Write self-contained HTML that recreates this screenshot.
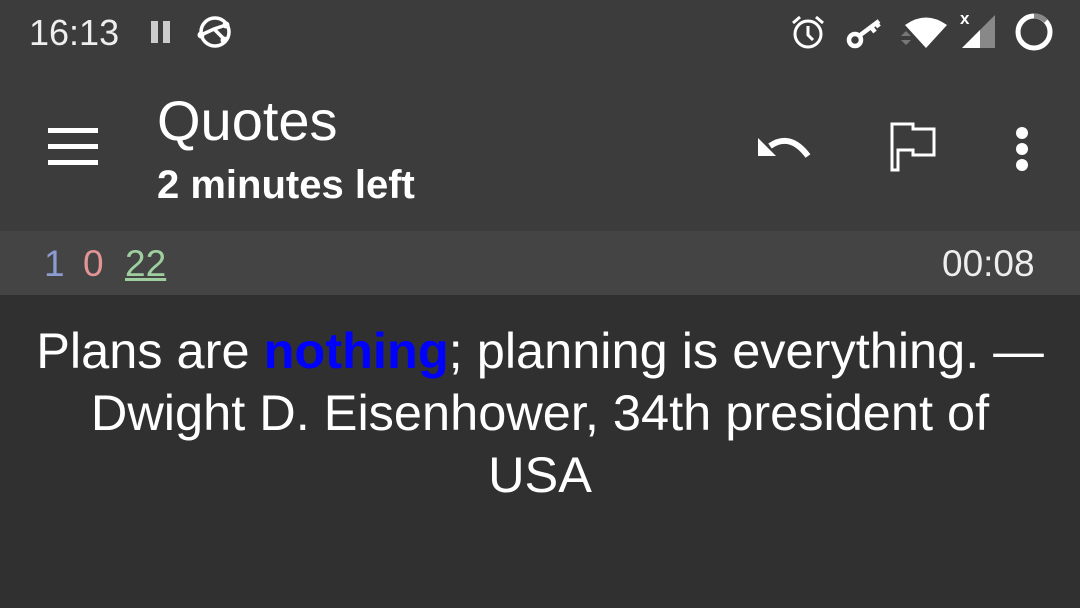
<!DOCTYPE html>
<html><head><meta charset="utf-8"><style>
*{margin:0;padding:0;box-sizing:border-box}
body{width:1080px;height:608px;background:#303030;font-family:"Liberation Sans",sans-serif;color:#fff;position:relative;overflow:hidden}
.top{position:absolute;left:0;top:0;width:1080px;height:231px;background:#3c3c3c}
.band{position:absolute;left:0;top:231px;width:1080px;height:64px;background:#444}
.abs{position:absolute;white-space:nowrap}
.quote{position:absolute;left:0;top:320px;width:1080px;text-align:center;font-size:50.5px;line-height:62px}
</style></head><body>
<div class="top"></div>
<div class="band"></div>
<div class="abs" style="left:29px;top:12px;font-size:36px;color:#eee">16:13</div>
<div class="abs" style="left:151px;top:21px;width:7px;height:22px;background:#ccc"></div>
<div class="abs" style="left:163px;top:21px;width:7px;height:22px;background:#ccc"></div>
<svg class="abs" style="left:196px;top:15px" width="40" height="34" viewBox="0 0 40 34"><circle cx="19" cy="17" r="14" fill="none" stroke="#fff" stroke-width="3.5"/><path d="M5 20 L18 14 L30 10 M18 14 L28 24" stroke="#fff" stroke-width="3.5" fill="none"/><circle cx="5" cy="20" r="3.5" fill="#fff"/><circle cx="30" cy="10" r="3.5" fill="#fff"/><circle cx="28" cy="25" r="3.5" fill="#fff"/></svg>
<svg class="abs" style="left:789px;top:14px" width="38" height="36" viewBox="0 0 38 36"><circle cx="19" cy="20" r="13" fill="none" stroke="#fff" stroke-width="3"/><path d="M19 12v9l5 5" stroke="#fff" stroke-width="3" fill="none"/><path d="M4 9 L11 3 M34 9 L27 3" stroke="#fff" stroke-width="3"/></svg>
<svg class="abs" style="left:845px;top:15px" width="40" height="34" viewBox="0 0 40 34"><circle cx="10" cy="25" r="6" fill="none" stroke="#fff" stroke-width="4.5"/><path d="M14 21 L34 6 M26 12 l4 5 M31 8 l3 4" stroke="#fff" stroke-width="4.5" fill="none"/></svg>
<svg class="abs" style="left:899px;top:14px" width="52" height="36" viewBox="0 0 52 36"><path d="M6 11 Q27 -4 48 11 L27 34 Z" fill="#fff"/><path d="M2 22 l5 -5 l5 5z M2 26 l5 5 l5 -5z" fill="#777"/></svg>
<div class="abs" style="left:960px;top:9px;font-size:17px;font-weight:bold">x</div>
<svg class="abs" style="left:960px;top:14px" width="36" height="36" viewBox="0 0 36 36"><path d="M2 34 L35 1 V34Z" fill="#888"/><path d="M2 34 L20 16 V34Z" fill="#fff"/></svg>
<svg class="abs" style="left:1013px;top:11px" width="42" height="42" viewBox="0 0 42 42"><circle cx="21" cy="21" r="16" fill="none" stroke="#fff" stroke-width="5"/><path d="M21 5 A16 16 0 0 1 33 10" stroke="#888" stroke-width="5" fill="none"/></svg>
<div class="abs" style="left:48px;top:128px;width:50px;height:5px;background:#fff"></div>
<div class="abs" style="left:48px;top:144px;width:50px;height:5px;background:#fff"></div>
<div class="abs" style="left:48px;top:160px;width:50px;height:5px;background:#fff"></div>
<div class="abs" style="left:157px;top:88px;font-size:56px">Quotes</div>
<div class="abs" style="left:157px;top:163px;font-size:40px;font-weight:bold">2 minutes left</div>
<svg class="abs" style="left:756px;top:130px" width="58" height="32" viewBox="0 0 58 32"><path d="M14 16 Q34 2 52 26" stroke="#fff" stroke-width="6" fill="none"/><path d="M2 8 V26 H20 Z" fill="#fff"/></svg>
<svg class="abs" style="left:889px;top:122px" width="48" height="50" viewBox="0 0 48 50"><path d="M3 48 V2 H24 V7 H45 V33 H24 V28 H9 V48 Z" fill="none" stroke="#fff" stroke-width="3"/></svg>
<div class="abs" style="left:1016px;top:127px;width:12px;height:12px;border-radius:50%;background:#fff"></div>
<div class="abs" style="left:1016px;top:143px;width:12px;height:12px;border-radius:50%;background:#fff"></div>
<div class="abs" style="left:1016px;top:159px;width:12px;height:12px;border-radius:50%;background:#fff"></div>
<div class="abs" style="left:44px;top:243px;font-size:37px;color:#8c9bd0">1</div>
<div class="abs" style="left:83px;top:243px;font-size:37px;color:#e39494">0</div>
<div class="abs" style="left:125px;top:243px;font-size:37px;color:#9fcf9f;text-decoration:underline">22</div>
<div class="abs" style="left:942px;top:243px;font-size:37px;color:#eee">00:08</div>
<div class="quote">Plans are <b style="color:#0000ff">nothing</b>; planning is everything. —<br>Dwight D. Eisenhower, 34th president of<br>USA</div>
</body></html>
